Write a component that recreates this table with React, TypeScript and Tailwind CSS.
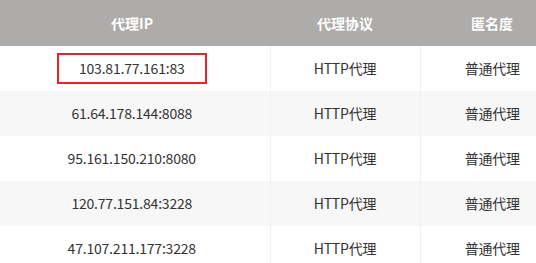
import React from 'react';

const rows = [
  { ip: '103.81.77.161:83', type: 'HTTP代理', level: '普通代理' },
  { ip: '61.64.178.144:8088', type: 'HTTP代理', level: '普通代理' },
  { ip: '95.161.150.210:8080', type: 'HTTP代理', level: '普通代理' },
  { ip: '120.77.151.84:3228', type: 'HTTP代理', level: '普通代理' },
  { ip: '47.107.211.177:3228', type: 'HTTP代理', level: '普通代理' },
];

const App: React.FC = () => {
  return (
    <div
      className="w-[536px] h-[263px] overflow-hidden bg-white text-[14px] text-[#333]"
      style={{ fontFamily: '"Noto Sans CJK SC", "Liberation Sans", sans-serif' }}
    >
      <table className="w-[564px] border-collapse table-fixed">
        <colgroup>
          <col className="w-[270px]" />
          <col className="w-[150px]" />
          <col className="w-[144px]" />
        </colgroup>
        <thead>
          <tr className="h-[46px] bg-[#aeacaa] text-white font-bold">
            <th className="pr-[6px] text-center">代理IP</th>
            <th className="text-center">代理协议</th>
            <th className="text-center">匿名度</th>
          </tr>
        </thead>
        <tbody>
          {rows.map((r, idx) => (
            <tr key={idx} className={`h-[45px] tracking-[-0.2px] ${idx % 2 === 1 ? 'bg-[#f7f7f7]' : 'bg-white'}`}>
              <td className="pr-[6px] text-center border-r border-[#f1f1f1]">
                {idx === 0 ? (
                  <span className="inline-flex w-[150px] h-[31px] items-center justify-center border-2 border-[#e8232b]">
                    {r.ip}
                  </span>
                ) : (
                  r.ip
                )}
              </td>
              <td className="text-center border-r border-[#f1f1f1]">{r.type}</td>
              <td className="text-center">{r.level}</td>
            </tr>
          ))}
        </tbody>
      </table>
    </div>
  );
};

export default App;
